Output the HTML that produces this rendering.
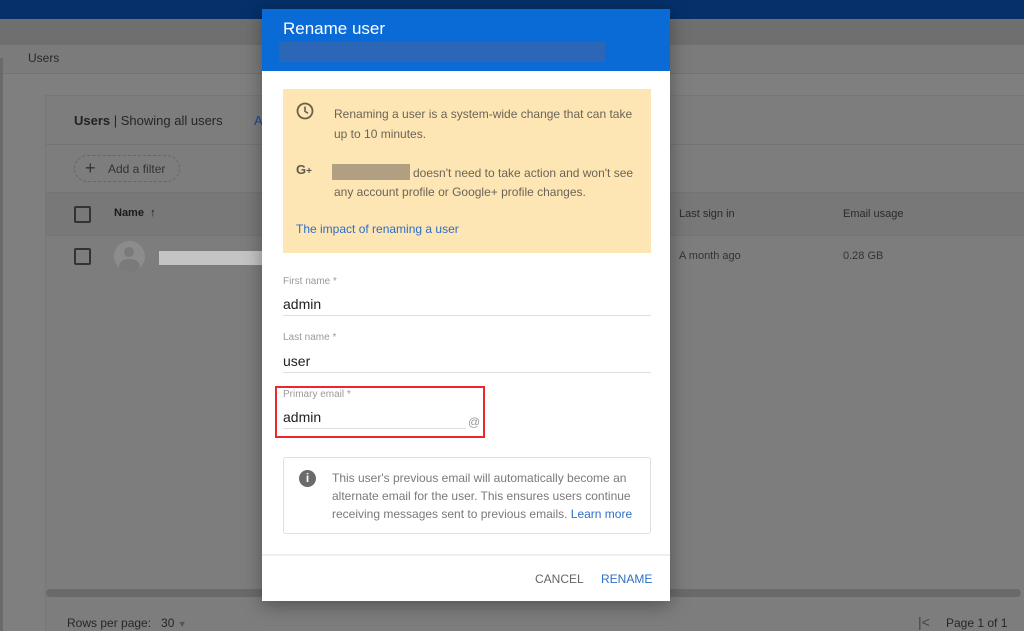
<!DOCTYPE html>
<html><head><meta charset="utf-8"><style>
*{margin:0;padding:0;box-sizing:border-box}
body{width:1024px;height:631px;overflow:hidden;background:#7f7f7f;font-family:"Liberation Sans",Arial,sans-serif;position:relative}
.a{position:absolute}
.t{position:absolute;white-space:nowrap}
</style></head><body>
<div class="a" style="left:0;top:0;width:1024px;height:19px;background:#05306a"></div>
<div class="a" style="left:0;top:19px;width:1024px;height:26px;background:#6f6f6f"></div>
<div class="a" style="left:0;top:45px;width:1024px;height:29px;background:#7b7b7b;border-bottom:1px solid #727272"></div>
<div class="a" style="left:0;top:58px;width:3px;height:573px;background:#6a6a6a"></div>
<div class="t" style="left:28px;top:51px;font-size:12px;color:#2a2a2a">Users</div>
<div class="a" style="left:45px;top:95px;width:979px;height:536px;background:#7d7d7d;border-left:1px solid #777;border-top:1px solid #777"></div>
<div class="a" style="left:46px;top:144px;width:978px;height:1px;background:#747474"></div>
<div class="a" style="left:46px;top:192px;width:978px;height:44px;background:#787878;border-top:1px solid #747474;border-bottom:1px solid #747474"></div>
<div class="t" style="left:74px;top:113px;font-size:13px;color:#262626"><b style="font-weight:bold;color:#222">Users</b> | Showing all users</div>
<div class="t" style="left:254px;top:113px;font-size:13px;color:#1a4a8a">A</div>
<div class="a" style="left:74px;top:155px;width:106px;height:27px;border:1px dashed #666;border-radius:14px"></div>
<div class="t" style="left:85px;top:158px;font-size:18px;color:#333">+</div>
<div class="t" style="left:108px;top:162px;font-size:12px;color:#333">Add a filter</div>
<div class="a" style="left:74px;top:206px;width:17px;height:17px;border:2px solid #333;border-radius:2px"></div>
<div class="t" style="left:114px;top:207px;font-size:11px;color:#1a1a1a;font-weight:bold">Name &nbsp;↑</div>
<div class="a" style="left:74px;top:248px;width:17px;height:17px;border:2px solid #333;border-radius:2px"></div>
<div class="a" style="left:114px;top:241px;width:31px;height:31px;border-radius:50%;background:#8c8c8c;overflow:hidden"><div class="a" style="left:10px;top:6px;width:10px;height:10px;border-radius:50%;background:#7a7a7a"></div><div class="a" style="left:5px;top:18px;width:21px;height:14px;border-radius:50%;background:#7a7a7a"></div></div>
<div class="a" style="left:159px;top:251px;width:103px;height:14px;background:#c4c4c4"></div>
<div class="t" style="left:679px;top:208px;font-size:11px;color:#2a2a2a">Last sign in</div>
<div class="t" style="left:843px;top:208px;font-size:11px;color:#2a2a2a">Email usage</div>
<div class="t" style="left:679px;top:250px;font-size:11px;color:#333">A month ago</div>
<div class="t" style="left:843px;top:250px;font-size:11px;color:#333">0.28 GB</div>
<div class="a" style="left:46px;top:589px;width:975px;height:8px;border-radius:4px;background:#6a6a6a"></div>
<div class="t" style="left:67px;top:616px;font-size:12px;color:#262626">Rows per page: &nbsp;&nbsp;30 <span style="font-size:9px;color:#555">▼</span></div>
<div class="t" style="left:918px;top:614px;font-size:14px;color:#444">|&lt;</div>
<div class="t" style="left:946px;top:616px;font-size:12px;color:#262626">Page 1 of 1</div>

<div class="a" style="left:262px;top:9px;width:408px;height:592px;background:#fff;box-shadow:0 4px 18px rgba(0,0,0,.35)">
 <div class="a" style="left:0;top:0;width:408px;height:62px;background:#0b6bd6"></div>
 <div class="t" style="left:21px;top:10px;font-size:17px;color:#fff">Rename user</div>
 <div class="a" style="left:17px;top:33px;width:326px;height:20px;background:#2b67b6"></div>
 <div class="a" style="left:21px;top:80px;width:368px;height:164px;background:#fde5b4"></div>
 <svg class="a" style="left:34px;top:93px" width="18" height="18" viewBox="0 0 18 18"><circle cx="9" cy="9" r="7.5" fill="none" stroke="#6a604d" stroke-width="1.8"/><path d="M9 4.5V9.3L12 11.3" fill="none" stroke="#6a604d" stroke-width="1.6"/></svg>
 <div class="t" style="left:72px;top:95px;font-size:12px;line-height:20px;color:#6b6557">Renaming a user is a system-wide change that can take<br>up to 10 minutes.</div>
 <div class="t" style="left:34px;top:153px;font-size:13px;font-weight:bold;color:#5f5a4d">G<span style="font-size:10px">+</span></div>
 <div class="a" style="left:70px;top:155px;width:78px;height:16px;background:#b0a081"></div>
 <div class="t" style="left:151px;top:154px;font-size:12px;line-height:20px;color:#6b6557">doesn't need to take action and won't see</div>
 <div class="t" style="left:72px;top:173px;font-size:12px;line-height:20px;color:#6b6557">any account profile or Google+ profile changes.</div>
 <div class="t" style="left:34px;top:213px;font-size:12px;color:#2e6fc6">The impact of renaming a user</div>
 <div class="t" style="left:21px;top:267px;font-size:10px;color:#9a9a9a">First name *</div>
 <div class="t" style="left:21px;top:287px;font-size:14px;color:#202020">admin</div>
 <div class="a" style="left:21px;top:306px;width:368px;height:1px;background:#ddd"></div>
 <div class="t" style="left:21px;top:323px;font-size:10px;color:#9a9a9a">Last name *</div>
 <div class="t" style="left:21px;top:344px;font-size:14px;color:#202020">user</div>
 <div class="a" style="left:21px;top:363px;width:368px;height:1px;background:#ddd"></div>
 <div class="a" style="left:13px;top:377px;width:210px;height:52px;border:2px solid #e8282a"></div>
 <div class="t" style="left:21px;top:380px;font-size:10px;color:#9a9a9a">Primary email *</div>
 <div class="t" style="left:21px;top:400px;font-size:14px;color:#202020">admin</div>
 <div class="a" style="left:21px;top:419px;width:183px;height:1px;background:#ddd"></div>
 <div class="t" style="left:206px;top:406px;font-size:12px;color:#999">@</div>
 <div class="a" style="left:21px;top:448px;width:368px;height:77px;border:1px solid #e0e0e0;border-radius:3px"></div>
 <div class="a" style="left:37px;top:461px;width:17px;height:17px;border-radius:50%;background:#6b6b6b;color:#fff;font-size:12px;font-weight:bold;text-align:center;line-height:17px">i</div>
 <div class="t" style="left:70px;top:460px;font-size:12px;line-height:18px;color:#7a7a7a">This user's previous email will automatically become an<br>alternate email for the user. This ensures users continue<br>receiving messages sent to previous emails. <span style="color:#2e6fc6">Learn more</span></div>
 <div class="a" style="left:0;top:545px;width:408px;height:2px;background:#eee"></div>
 <div class="t" style="left:273px;top:563px;font-size:12px;color:#666">CANCEL</div>
 <div class="t" style="left:339px;top:563px;font-size:12px;color:#2e6fc6">RENAME</div>
</div>
</body></html>
